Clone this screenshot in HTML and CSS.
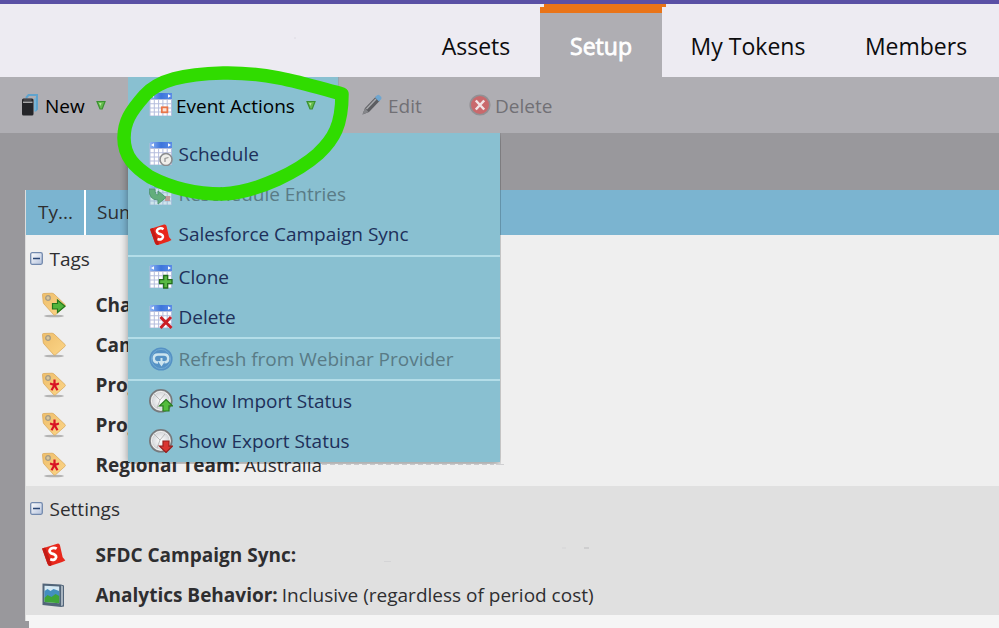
FILE: index.html
```html
<!DOCTYPE html>
<html lang="en">
<head>
<meta charset="utf-8">
<title>Event setup</title>
<link rel="stylesheet" href="styles.css">
</head>
<body>
<svg class="defs" aria-hidden="true">
  <defs>
    <linearGradient id="gBlue" x1="0" x2="1"><stop offset="0" stop-color="#8fb4f2"/><stop offset=".5" stop-color="#3c74dc"/><stop offset="1" stop-color="#5b8ce6"/></linearGradient>
    <linearGradient id="gTag" x1="0" x2="1" y2="1"><stop offset="0" stop-color="#efbf6c"/><stop offset="1" stop-color="#fbd587"/></linearGradient>
    <radialGradient id="gDisc"><stop offset="0" stop-color="#fff"/><stop offset=".7" stop-color="#dcdde0"/><stop offset="1" stop-color="#aaa"/></radialGradient>
    <linearGradient id="gBox" y2="1" x2="1"><stop offset="0" stop-color="#fff"/><stop offset="1" stop-color="#b3c1dc"/></linearGradient>
  </defs>
  <symbol id="cal" viewBox="0 0 24 24">
    <path d="M.5 1h22.500v22H.5z" fill="#b4bddd"/>
    <path d="M1 0h22v6H1z" fill="url(#gBlue)"/>
    <path d="M5 1.200v3.600L2 3zM19 1.200v3.600L22 3z" fill="#fff"/>
    <path d="M1.500 7h3.300v3.200H1.500zm4.300 0h3.300v3.200H5.800zm4.300 0h3.300v3.200h-3.300zm4.300 0h3.300v3.200h-3.300zm4.300 0H22v3.200h-3.300zM1.500 11.200h3.300v3.200H1.500zm4.300 0h3.300v3.200H5.800zm4.300 0h3.300v3.200h-3.300zm4.300 0h3.300v3.200h-3.300zm4.300 0H22v3.200h-3.300zM1.500 15.400h3.300v3.200H1.500zm4.300 0h3.300v3.200H5.800zm4.300 0h3.300v3.200h-3.300zm4.300 0h3.300v3.200h-3.300zm4.300 0H22v3.200h-3.300zM1.500 19.600h3.300v3H1.500zm4.300 0h3.300v3H5.800zm4.300 0h3.300v3h-3.300zm4.300 0h3.300v3h-3.300zm4.300 0H22v3h-3.300z" fill="#fff"/>
  </symbol>
  <symbol id="tag" viewBox="0 0 26 26">
    <ellipse cx="13" cy="24" rx="10" ry="1.300" fill="#000" opacity=".25"/>
    <path d="M1.500 2.500Q1.500 1.500 2.500 1.500L11 1.200Q12 1.200 13 2L24 12.500Q24.800 13.500 24 14.300L14.500 22.800Q13.500 23.500 12.500 22.500L3 12Q2.300 11 2.200 10z" fill="url(#gTag)" stroke="#dba95a" stroke-width=".8"/>
    <circle cx="7" cy="6" r="2.300" fill="#d9c79c" stroke="#a39a86" stroke-width="1.300"/>
  </symbol>
  <symbol id="star" viewBox="0 0 10 12">
    <path d="M5 0.500V6M0.500 4.500L5 6L9.500 4.500M5 6L2 11.300M5 6L8 11.300" stroke="#d91424" stroke-width="2.200" fill="none"/>
  </symbol>
  <symbol id="sfdc" viewBox="0 0 24 24">
    <path d="M1 6L15 1.500Q17 1 17.500 3L20 14L22.500 17L19.500 18.500L9 22Q7 22.500 6 20Z" fill="#e8281c"/>
    <path d="M1 6L6 20Q7 22.500 9 22L10 20.500L4 5z" fill="#c41c16"/>
    <path d="M14.500 6.200Q12 4.500 9 6.200Q6.500 8.500 9.500 10.500Q14 11.500 14 14Q13 17.500 8.500 16" fill="none" stroke="#fff" stroke-width="2.500"/>
  </symbol>
  <symbol id="disc" viewBox="0 0 24 24">
    <circle cx="11.800" cy="11.800" r="11" fill="url(#gDisc)" stroke="#77797c" stroke-width="1.600"/>
    <circle cx="11.800" cy="11.800" r="9.300" fill="none" stroke="#f8f8f8"/>
    <path d="M5 5l6 6 5-6M11 11l-3 8" stroke="#bbb" fill="none"/>
  </symbol>
  <symbol id="drop" viewBox="0 0 10 11">
    <path d="M1 1.500h8L6.200 9H4z" fill="#66bb4e" stroke="#39922f" stroke-width="1.200"/><path d="M3 3h2.500L4.500 6z" fill="#b8e7a4"/>
  </symbol>
  <symbol id="minus" viewBox="0 0 13 13">
    <rect x=".7" y=".7" width="11.600" height="11.600" rx="1.500" fill="url(#gBox)" stroke="#7289ad" stroke-width="1.300"/><path d="M3 6.500h7" stroke="#2b4775" stroke-width="1.500"/>
  </symbol>
</svg>

<div class="app">
  <nav class="tabs">
    <a class="tab assets">Assets</a>
    <a class="tab setup">Setup</a>
    <a class="tab tokens">My Tokens</a>
    <a class="tab members">Members</a>
  </nav>

  <div class="toolbar">
    <div class="tool new">
      <svg class="i-new" viewBox="0 0 18 23"><path d="M5 4l2.500-3H16v14l-2 2" fill="none" stroke="#5fa3cd" stroke-width="2"/><path d="M13 5l2-2v13l-2 2z" fill="#79b4d6"/><rect x="1" y="4.500" width="11.500" height="17" rx="1.500" fill="#242529"/><path d="M2 8.200h9.500" stroke="#c8c8ca" stroke-width="1.200"/><path d="M2.500 6h8" stroke="#66676a"/></svg>
      <span>New</span>
      <svg class="i-drop"><use href="#drop"/></svg>
    </div>
    <div class="tool actions">
      <svg class="i24" viewBox="0 0 24 24"><use href="#cal"/><rect x="12.800" y="14.300" width="5.600" height="5" fill="#fde2d2" stroke="#e8764a" stroke-width="1.800"/></svg>
      <span>Event Actions</span>
      <svg class="i-drop"><use href="#drop"/></svg>
    </div>
    <div class="tool edit off">
      <svg class="i-edit" viewBox="0 0 22 22"><path d="M1.500 20.500L4 14 15 2.500l4 4L8 18z" fill="#5c5d61"/><path d="M5.500 15L15 5" stroke="#a7a8ac" stroke-width="1.600"/><path d="M14 3.500L16 1.300Q17.300.2 18.500 1.200L20.300 3Q21 4.200 20 5.300L18 7.500z" fill="#6fa6cf"/><path d="M1.500 20.500L4 14l3.500 4z" fill="#85868a"/></svg>
      <span>Edit</span>
    </div>
    <div class="tool del off">
      <svg class="i-del" viewBox="0 0 22 22"><circle cx="11" cy="11" r="9.800" fill="#c9696c" stroke="#929094" stroke-width="1.600"/><path d="M6.800 6.500l8.400 9M15.200 6.500l-8.400 9" stroke="#f2e4e6" stroke-width="2.500"/></svg>
      <span>Delete</span>
    </div>
  </div>

  <div class="workspace">
    <section class="panel">
      <header class="cols"><span class="col-type">Ty...</span><span class="col-sum">Summary</span></header>
      <div class="group tags">
        <h2 class="group-head"><svg class="i13"><use href="#minus"/></svg>Tags</h2>
        <div class="row"><svg class="i26" viewBox="0 0 26 26"><use href="#tag"/><path d="M11.500 11.500h5V8l7.500 6.200-7.500 6.300V17h-5z" fill="#51b43c" stroke="#23771c" stroke-width="1.200"/></svg><b>Channel:</b></div>
        <div class="row"><svg class="i26"><use href="#tag"/></svg><b>Campaign:</b></div>
        <div class="row"><svg class="i26" viewBox="0 0 26 26"><use href="#tag"/><use href="#star" x="8.500" y="7" width="10" height="12"/></svg><b>Program:</b></div>
        <div class="row"><svg class="i26" viewBox="0 0 26 26"><use href="#tag"/><use href="#star" x="8.500" y="7" width="10" height="12"/></svg><b>Program:</b></div>
        <div class="row"><svg class="i26" viewBox="0 0 26 26"><use href="#tag"/><use href="#star" x="8.500" y="7" width="10" height="12"/></svg><b>Regional Team:</b><span class="aus">Australia</span></div>
      </div>
      <div class="group settings">
        <h2 class="group-head"><svg class="i13"><use href="#minus"/></svg>Settings</h2>
        <div class="row"><svg class="i26"><use href="#sfdc"/></svg><b>SFDC Campaign Sync:</b></div>
        <div class="row"><svg class="i26" viewBox="0 0 26 26"><path d="M1.500 1.500L20 2.500l3 1v21l-3 .5-18.500-2z" fill="#526579"/><path d="M20 3.500l2 .7v19l-2 .8z" fill="#a8b4bf"/><path d="M3.500 3.800l14.700.8v16.700L3.500 20z" fill="#d5e9f4"/><path d="M3.500 9l3-2 3 2 3-2 5.700 2v7H3.500z" fill="#438fbf"/><path d="M3.500 16l3-3 4 2 4-3 3.700 2v7.300L3.500 20z" fill="#3fa538"/></svg><b>Analytics Behavior:</b><span class="incl">Inclusive (regardless of period cost)</span></div>
      </div>
    </section>
  </div>

  <div class="menu">
    <div class="item"><svg class="i24" viewBox="0 0 24 24"><use href="#cal"/><circle cx="17" cy="17.500" r="6" fill="#eeeeea" stroke="#8a8c8f" stroke-width="1.600"/><path d="M16 20v-3.500l3.500-1" fill="none" stroke="#999" stroke-width="1.300"/></svg><span>Schedule</span></div>
    <div class="item off"><svg class="i24 faded" viewBox="0 0 24 24"><use href="#cal"/><path d="M16 14h5v5h-5z" fill="#e87e72"/><path d="M0 7h6q0 6 3 6V9l8 6.500L9 22v-4Q0 18 0 7z" fill="#4aa345" stroke="#2d7c35"/></svg><span>Reschedule Entries</span></div>
    <div class="item last"><svg class="i24"><use href="#sfdc"/></svg><span>Salesforce Campaign Sync</span></div>
    <hr>
    <div class="item"><svg class="i24" viewBox="0 0 24 24"><use href="#cal"/><path d="M14.700 10.500h4v4.200H23v4h-4.300V23h-4v-4.300h-4.200v-4h4.200z" fill="#58b943" stroke="#236d1b" stroke-width="1.300"/></svg><span>Clone</span></div>
    <div class="item last"><svg class="i24" viewBox="0 0 24 24"><use href="#cal"/><path d="M11.500 12l11 11M22 12L11.500 23" stroke="#cb1f25" stroke-width="2.900"/></svg><span>Delete</span></div>
    <hr>
    <div class="item off"><svg class="i24" viewBox="0 0 24 24"><circle cx="12" cy="12" r="11.600" fill="#5591c5"/><circle cx="12" cy="12" r="9.600" fill="none" stroke="#6fa9d2"/><path d="M9 15.500Q4.800 15.500 4.800 11.500T9 7.500H15Q19.200 7.500 19.200 11.500T15.500 15.300" fill="none" stroke="#cce4ef" stroke-width="2.500"/><path d="M8.800 14h7.400l-3.700 5.500z" fill="#cce4ef"/><path d="M12.500 11v4" stroke="#cce4ef" stroke-width="2"/></svg><span>Refresh from Webinar Provider</span></div>
    <hr>
    <div class="item"><svg class="i24" viewBox="0 0 24 24"><use href="#disc"/><path d="M17 10.500l6.500 6.300H20V22h-6v-5.200h-3.500z" fill="#54bd3c" stroke="#297d20" stroke-width="1.200"/></svg><span>Show Import Status</span></div>
    <div class="item last"><svg class="i24" viewBox="0 0 24 24"><use href="#disc"/><path d="M17 23.500l6.500-6.300H20V12h-6v5.200h-3.500z" fill="#da3431" stroke="#98201e" stroke-width="1.200"/></svg><span>Show Export Status</span></div>
  </div>

  <svg class="overlay" viewBox="0 0 999 628">
    <path d="M540 4h4v3h-4z" fill="#edebf2"/>
    <path d="M662 4h4v3h-4z" fill="#e97418"/>
    <path d="M25 621h4v7h-4z" fill="#99989c"/>
    <path d="M322 464.500h172" stroke="#c9c9cc" stroke-dasharray="5 3"/>
    <path d="M496 464.500h8" stroke="#d0d0d2"/>
    <path d="M584 548h5" stroke="#bcbcbe"/>
    <path d="M384 561.500h7M562 548h4" stroke="#d4d4d6"/>
    <path d="M294 38h2" stroke="#dcdae2"/>
    <path class="marker" d="M342 94C308 85 271 72 223 73C183 74 159 80 145 95C130 112 124 122 124 138C124 157 135 167 150 177C173 189 198 194 222 194C260 192 300 170 318 154C334 139 342 125 342 94"/>
  </svg>
</div>
</body>
</html>
```
FILE: styles.css
```css
* { box-sizing: border-box; }
body { margin: 0; font-family: "Open Sans", sans-serif; font-size: 19px; color: #2e2e30; }
.defs { position: absolute; width: 0; height: 0; }
svg { flex: none; display: block; }
.app { position: relative; width: 999px; height: 628px; overflow: hidden; background: #99989c; white-space: nowrap; }

.tabs { display: flex; height: 77px; background: #edebf2; border-top: 4px solid #5a50a5; font-size: 23px; color: #0c0c0e; }
.tab { display: flex; justify-content: center; align-items: center; padding-top: 10px; }
.assets { width: 128px; margin-left: 412px; }
.setup { width: 122px; background: #afaeb3; border-top: 9px solid #e97418; padding-top: 1px; color: #fff; -webkit-text-stroke: .8px #fff; }
.tokens { width: 172px; }
.members { width: 164px; }

.toolbar { display: flex; height: 56px; background: #afaeb3; color: #000; }
.tool { display: flex; align-items: center; }
.tool span { padding-top: 2px; }
.tool.off { color: #717075; }
.new { width: 128px; padding-left: 21px; }
.new span { margin-left: 6px; }
.i-new { width: 18px; height: 23px; }
.i-drop { width: 10px; height: 11px; margin-left: 11px; }
.actions { width: 210px; padding-left: 21px; background: #89c0d1; }
.actions span { margin-left: 3px; }
.edit { width: 130px; padding-left: 22px; border-left: 1px solid #98a5ad; }
.edit span { margin-left: 5px; }
.i-edit, .i-del { width: 22px; height: 22px; }
.del { padding-left: 1px; }
.del span { margin-left: 4px; }
.i24 { width: 24px; height: 24px; }
.i26 { width: 26px; height: 26px; margin-right: 28px; }
.i13 { width: 13px; height: 13px; margin-right: 7px; }

.workspace { padding: 57px 0 0 25px; }
.panel { height: 438px; background: #f5f5f5; border-left: 1px solid #ddd; }
.cols { display: flex; height: 45px; background: #7bb4d0; line-height: 44px; }
.col-type { width: 60px; padding-left: 12px; border-right: 2px solid #fff; }
.col-sum { padding-left: 11px; }
.group { height: 251px; background: #efefef; }
.settings { height: 129px; background: #e0e0e0; }
.group-head { display: flex; align-items: center; height: 49px; margin: 0; padding: 0 0 2px 3.500px; font-size: 19px; font-weight: 400; }
.settings .group-head { padding-bottom: 4px; }
.row { display: flex; align-items: center; height: 40px; padding-left: 15px; }
.row b { margin-left: .5px; }
.tags .row:nth-child(2) { margin-top: 1px; }
.row span { margin-left: 4px; }

.menu { position: absolute; left: 128px; top: 133px; width: 372px; height: 329px; padding-top: 1px; background: #89c0d1; box-shadow: 0 2px 8px rgba(0,0,0,.4); clip-path: inset(0 -1px -2px -8px); color: #20305a; }
.item { display: flex; align-items: center; height: 40px; padding-left: 21px; }
.item span { margin-left: 5.500px; padding-bottom: 1px; letter-spacing: -.02px; }
.item.last { height: 41px; }
.item.off { color: #597b86; }
.faded { opacity: .6; }
.menu hr { height: 2px; margin: 0; border: 0; background: #b3dde8; }
.menu hr + .item + .last { height: 40px; }

.overlay { position: absolute; inset: 0; width: 999px; height: 628px; }
.marker { fill: none; stroke: #30dc00; stroke-width: 13.500px; stroke-linecap: round; stroke-linejoin: round; }
```
